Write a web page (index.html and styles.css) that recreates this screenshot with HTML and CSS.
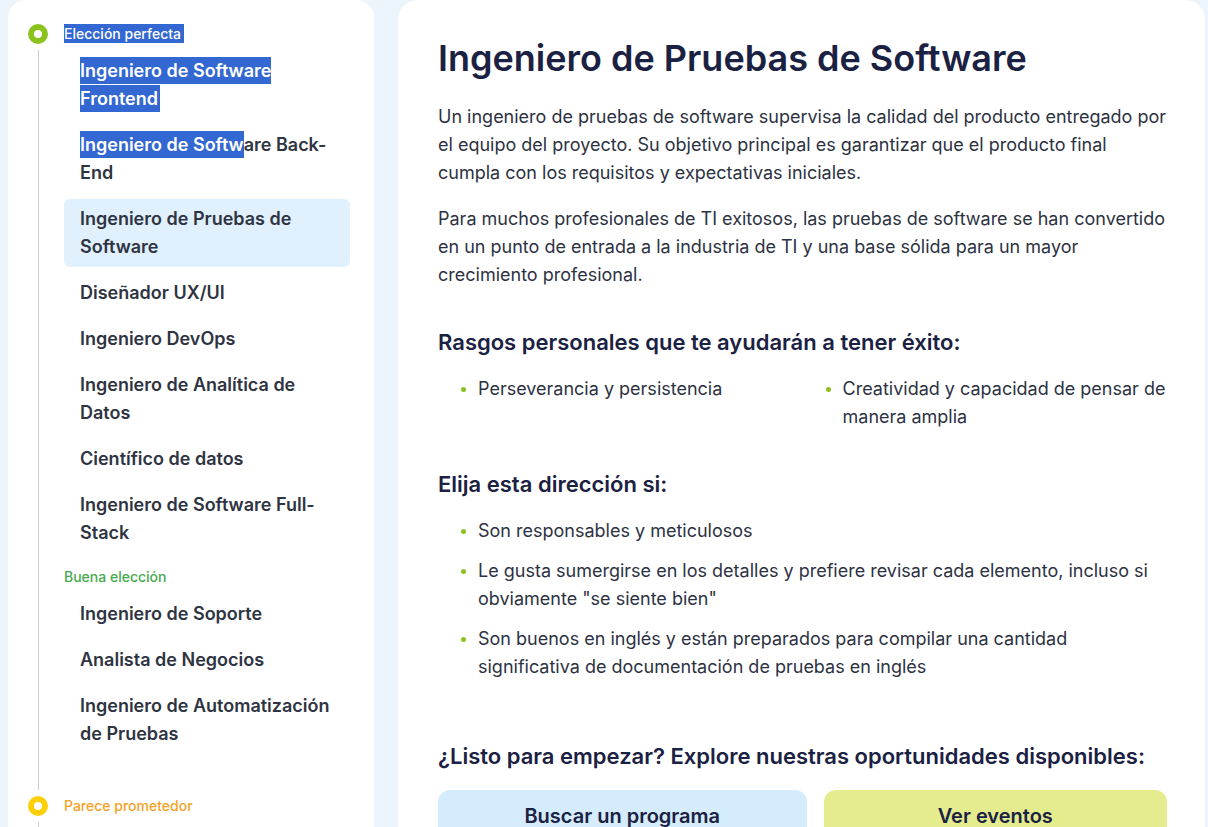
FILE: index.html
```html
<!DOCTYPE html>
<html lang="es">
<head>
<meta charset="utf-8">
<title>Ingeniero de Pruebas de Software</title>
<link rel="stylesheet" href="styles.css">
</head>
<body>
<div class="page">
  <nav class="sidebar">
    <div class="timeline">
      <section class="group">
        <span class="dot dot-green"></span>
        <div class="label label-perfect"><span class="sel sel-full">Elección perfecta</span></div>
        <ul class="items">
          <li class="item"><span class="sel sel-full">Ingeniero de Software Frontend</span></li>
          <li class="item"><span class="sel">Ingeniero de Softw</span>are Back-End</li>
          <li class="item item-active">Ingeniero de Pruebas de Software</li>
          <li class="item">Diseñador UX/UI</li>
          <li class="item">Ingeniero DevOps</li>
          <li class="item">Ingeniero de Analítica de Datos</li>
          <li class="item">Científico de datos</li>
          <li class="item">Ingeniero de Software Full-Stack</li>
        </ul>
        <div class="label label-good">Buena elección</div>
        <ul class="items">
          <li class="item">Ingeniero de Soporte</li>
          <li class="item">Analista de Negocios</li>
          <li class="item">Ingeniero de Automatización de Pruebas</li>
        </ul>
      </section>
      <section class="group group-next">
        <span class="dot dot-yellow"></span>
        <div class="label label-promising">Parece prometedor</div>
      </section>
    </div>
  </nav>

  <main class="content">
    <h1 class="title">Ingeniero de Pruebas de Software</h1>
    <p class="text">Un ingeniero de pruebas de software supervisa la calidad del producto entregado por el equipo del proyecto. Su objetivo principal es garantizar que el producto final cumpla con los requisitos y expectativas iniciales.</p>
    <p class="text">Para muchos profesionales de TI exitosos, las pruebas de software se han convertido en un punto de entrada a la industria de TI y una base sólida para un mayor crecimiento profesional.</p>

    <h2 class="subtitle">Rasgos personales que te ayudarán a tener éxito:</h2>
    <ul class="bullets bullets-grid">
      <li class="bullet">Perseverancia y persistencia</li>
      <li class="bullet">Creatividad y capacidad de pensar de manera amplia</li>
    </ul>

    <h2 class="subtitle">Elija esta dirección si:</h2>
    <ul class="bullets">
      <li class="bullet">Son responsables y meticulosos</li>
      <li class="bullet">Le gusta sumergirse en los detalles y prefiere revisar cada elemento, incluso si obviamente "se siente bien"</li>
      <li class="bullet">Son buenos en inglés y están preparados para compilar una cantidad significativa de documentación de pruebas en inglés</li>
    </ul>

    <h2 class="subtitle subtitle-cta">¿Listo para empezar? Explore nuestras oportunidades disponibles:</h2>
    <div class="actions">
      <a class="btn btn-blue" href="#">Buscar un programa</a>
      <a class="btn btn-lime" href="#">Ver eventos</a>
    </div>
  </main>
</div>
</body>
</html>
```

FILE: styles.css
```css
* { box-sizing: border-box; }

html, body {
  margin: 0;
  padding: 0;
  height: 100%;
  overflow: hidden;
}

body {
  background: #edf5fc;
  font-family: Inter, "Noto Sans", "Liberation Sans", sans-serif;
  color: #2d3242;
}

.page {
  display: flex;
  gap: 24px;
  padding: 0 3px 0 8px;
  align-items: flex-start;
}

/* Sidebar */
.sidebar {
  width: 366px;
  flex: none;
  background: #fff;
  border-radius: 18px 18px 0 0;
  padding: 25px 24px 60px 30px;
  min-height: 900px;
}

.timeline {
  border-left: 1px solid #cfcfcf;
  padding-left: 25px;
  min-height: 860px;
}

.group {
  position: relative;
}

.group-next {
  margin-top: 43px;
}

.dot {
  position: absolute;
  left: -36px;
  top: -1px;
  width: 20px;
  height: 20px;
  border-radius: 50%;
  border: 6px solid #8cc21e;
  background: #fff;
  box-shadow: 0 0 0 6px #fff;
}

.dot-yellow { border-color: #ffcf06; }

.label {
  font-size: 14px;
  line-height: 18px;
  font-weight: 500;
}

.label-perfect { color: #fff; }
.label-good { color: #45a94e; margin-top: 15px; }
.label-promising { color: #f5a21f; }

.sel {
  background: #3367d1;
  color: #fff;
  padding: 3px 0;
}

.sel-full { padding-right: 2px; }

.label .sel { padding: 1px 3px 1px 0; }

.items {
  list-style: none;
  margin: 8px 0 0;
  padding: 0;
  display: flex;
  flex-direction: column;
  gap: 6px;
}

.item {
  padding: 6px 16px;
  font-size: 18px;
  line-height: 28px;
  font-weight: 600;
  color: #2f3442;
  border-radius: 6px;
}

.item-active {
  background: #e0f0fd;
}

/* Main content */
.content {
  flex: 1;
  background: #fff;
  border-radius: 20px 20px 0 0;
  padding: 36px 38px 40px 40px;
  min-height: 900px;
}

.title {
  margin: 0 0 23px;
  font-size: 36px;
  line-height: 44px;
  font-weight: 600;
  color: #1b2142;
}

.text {
  margin: 0 0 18px;
  font-size: 18px;
  line-height: 28px;
  color: #2d3242;
}

.subtitle {
  margin: 39px 0 19px;
  font-size: 22px;
  line-height: 28px;
  font-weight: 600;
  color: #1b2142;
}

.subtitle-cta {
  margin-top: 61px;
  margin-bottom: 20px;
}

.bullets {
  list-style: none;
  margin: 0;
  padding: 0;
  display: flex;
  flex-direction: column;
  gap: 12px;
}

.bullets-grid {
  display: grid;
  grid-template-columns: 1fr 1fr;
  gap: 12px 0;
}

.bullet {
  position: relative;
  padding-left: 40px;
  font-size: 18px;
  line-height: 28px;
  color: #2d3242;
}

.bullet::before {
  content: "";
  position: absolute;
  left: 23px;
  top: 12px;
  width: 5px;
  height: 5px;
  border-radius: 50%;
  background: #8cc21e;
}

.actions {
  display: grid;
  grid-template-columns: 368fr 343fr;
  gap: 17px;
}

.btn {
  display: flex;
  align-items: center;
  justify-content: center;
  height: 52px;
  border-radius: 12px;
  font-size: 20px;
  font-weight: 600;
  color: #1b2142;
  text-decoration: none;
}

.btn-blue { background: #d4ecfb; }
.btn-lime { background: #e4ec8e; }
```
